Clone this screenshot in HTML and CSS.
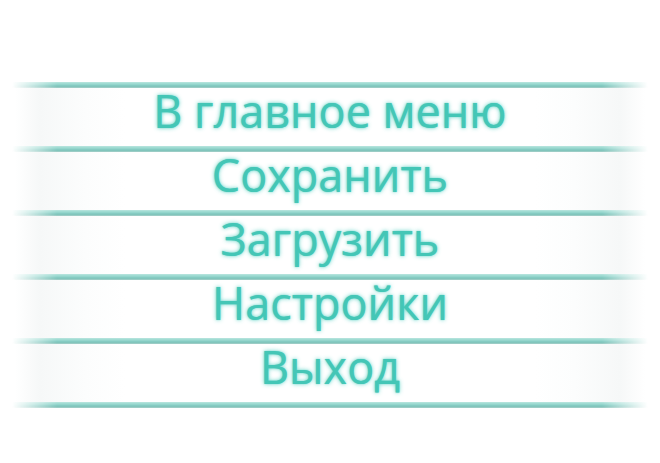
FILE: index.html
```html
<!DOCTYPE html>
<html lang="ru">
<head>
<meta charset="utf-8">
<link rel="stylesheet" href="styles.css">
</head>
<body>
<nav class="menu">
  <div class="sep"></div>
  <div class="item">В главное меню</div>
  <div class="sep"></div>
  <div class="item">Сохранить</div>
  <div class="sep"></div>
  <div class="item">Загрузить</div>
  <div class="sep"></div>
  <div class="item">Настройки</div>
  <div class="sep"></div>
  <div class="item">Выход</div>
  <div class="sep"></div>
</nav>
</body>
</html>
```
FILE: styles.css
```css
html, body {
  margin: 0;
  background: #ffffff;
}
.menu {
  padding-top: 82px;
  display: flex;
  flex-direction: column;
}
.sep {
  height: 6px;
  margin: 0 12px;
  background: linear-gradient(to bottom, #86d4c9 0, #86d4c9 2px, #d6f0ec 2px, #d6f0ec 3px, #5fbbaf 3px, #5fbbaf 5px, #9cc7c1 5px, #9cc7c1 6px);
  box-shadow: 0 1px 3px rgba(70, 120, 115, 0.4);
  filter: blur(0.8px);
  -webkit-mask-image: linear-gradient(to right, transparent 0, #000 45px, #000 590px, transparent 636px);
  mask-image: linear-gradient(to right, transparent 0, #000 45px, #000 590px, transparent 636px);
}
.item {
  height: 58px;
  margin: 0 15px;
  display: flex;
  align-items: center;
  justify-content: center;
  padding-bottom: 13px;
  box-sizing: border-box;
  font-family: "Open Sans", "Noto Sans", sans-serif;
  font-size: 45px;
  font-weight: 400;
  line-height: 1;
  color: #44c6b6;
  text-shadow: 0 0 4px rgba(70, 205, 190, 0.85), 0 0 1px rgba(70, 205, 190, 0.8);
  background: linear-gradient(to right, rgba(240, 244, 244, 0) 0, #f6f8f8 25px, #fcfdfd 70px, #ffffff 110px, #ffffff 520px, #fcfdfd 560px, #f6f8f8 605px, rgba(240, 244, 244, 0) 630px);
}
```
